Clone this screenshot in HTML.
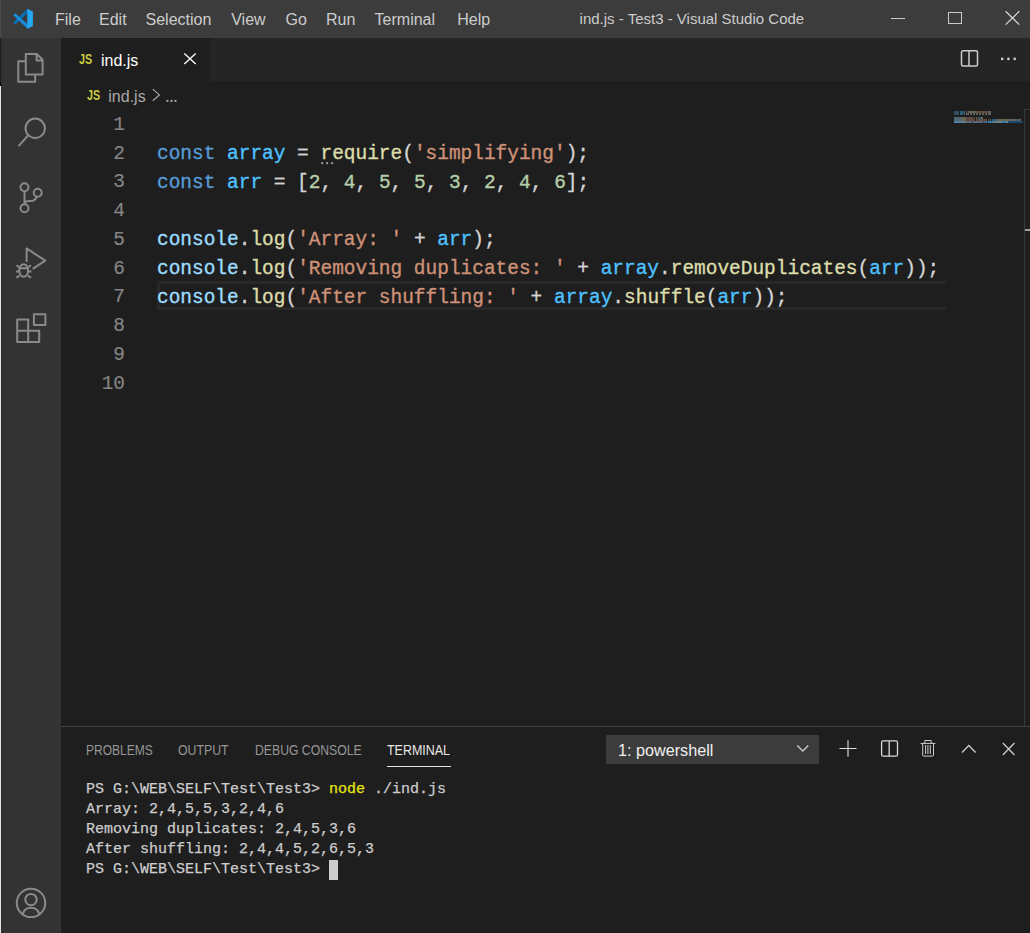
<!DOCTYPE html>
<html><head><meta charset="utf-8">
<style>
*{margin:0;padding:0;box-sizing:border-box}
html,body{width:1030px;height:933px;overflow:hidden;background:#1e1e1e}
body{position:relative;font-family:"Liberation Sans",sans-serif}
.a{position:absolute}
.t{position:absolute;white-space:pre;line-height:1}
#title{left:0;top:0;width:1030px;height:38px;background:#3c3c3c}
#menu span{position:absolute;top:10.4px;font-size:16px;color:#cccccc;white-space:pre;line-height:19px}
#act{left:0;top:38px;width:61px;height:895px;background:#333333}
#tabs{left:61px;top:38px;width:969px;height:43px;background:#252526}
#tab{left:61px;top:38px;width:149px;height:44px;background:#1e1e1e}
.code{position:absolute;left:157px;-webkit-text-stroke:0.35px currentColor;font-family:"Liberation Mono",monospace;font-size:19.47px;line-height:28.75px;white-space:pre;color:#d4d4d4}
.ln{position:absolute;left:90px;-webkit-text-stroke:0.15px currentColor;width:35px;text-align:right;font-family:"Liberation Mono",monospace;font-size:19.47px;line-height:28.75px;color:#858585}
.k{color:#569cd6}.c{color:#4fc1ff}.v{color:#9cdcfe}.f{color:#dcdcaa}.s{color:#ce9178}.n{color:#b5cea8}
.term{position:absolute;left:86px;-webkit-text-stroke:0.25px currentColor;font-family:"Liberation Mono",monospace;font-size:15px;line-height:20px;white-space:pre;color:#cccccc}
.js{font-size:14px;font-weight:bold;color:#cbcb41;line-height:14px;transform:scaleX(0.77);transform-origin:0 0}
.pt{position:absolute;top:741px;font-size:15px;line-height:18px;color:#969696;white-space:pre;transform-origin:0 0}
</style></head><body>
<div id="title" class="a"></div>
<svg class="a" style="left:0;top:0" width="40" height="38">
  <polygon points="13.3,22.4 15.2,24.4 27.6,13 27.6,8.8" fill="#0870b8"/>
  <polygon points="13.3,15.2 15.2,13.2 27.6,24.2 27.6,28.8" fill="#138ee0"/>
  <polygon points="27.3,8.8 32.9,11.6 32.9,26 27.3,28.9" fill="#25a9f2"/>
</svg>
<div id="menu">
<span style="left:55px">File</span>
<span style="left:99px">Edit</span>
<span style="left:145.5px">Selection</span>
<span style="left:231.2px">View</span>
<span style="left:285.6px">Go</span>
<span style="left:326px">Run</span>
<span style="left:374.6px">Terminal</span>
<span style="left:457.2px">Help</span>
</div>
<div class="t" style="left:579.6px;top:9px;font-size:15px;color:#cccccc;line-height:19px">ind.js - Test3 - Visual Studio Code</div>
<svg class="a" style="left:880px;top:0" width="150" height="38" fill="none" stroke="#cccccc" stroke-width="1">
  <line x1="11" y1="18.5" x2="25" y2="18.5"/>
  <rect x="68.5" y="12.5" width="13" height="11"/>
  <path d="M125.6 11.3L139.3 24.6M139.3 11.3L125.6 24.6" stroke-width="1.25" stroke="#d8d8d8"/>
</svg>

<div id="act" class="a"></div>
<div class="a" style="left:0;top:0;width:1px;height:38px;background:#4a4a4a"></div>
<div class="a" style="left:0;top:38px;width:1px;height:895px;background:#e6e6e6"></div>
<div class="a" style="left:0;top:38px;width:1px;height:44px;background:#1b1f26"></div>
<div class="a" style="left:0;top:82px;width:1px;height:4px;background:#080808"></div>
<div class="a" style="left:1px;top:38px;width:1px;height:895px;background:#2c2c2c"></div>
<svg class="a" style="left:0;top:38px" width="61" height="895" fill="none" stroke="#8a8a8a" stroke-width="2" stroke-linejoin="round">
  <g transform="translate(0,-38)">
  <path d="M25.8 54.1H37L42.6 59.7V74.5H25.8Z M36.6 54.1V60.4H42.6 M25.8 61.3H18.3V81.7H35.2V74.5"/>
  <circle cx="35.2" cy="128.3" r="9.7"/><line x1="28.4" y1="135.2" x2="18.5" y2="146.2"/>
  <circle cx="24.5" cy="187.3" r="4"/><circle cx="24.5" cy="208.3" r="4"/><circle cx="37.7" cy="192.8" r="4"/>
  <path d="M24.5 191.3V204.3 M36.8 196.6Q35.5 201 30.5 201H29Q25 201 24.5 204"/>
  <path d="M26.6 262V248.4L45.2 260.7L32.7 268.9"/>
  <ellipse cx="23.7" cy="270.5" rx="4.4" ry="6.3"/>
  <path d="M19.3 268.3H28.1 M16.4 265.2L19.4 267.3 M31 265.2L28 267.3 M16 271.6H19.3 M31.4 271.6H28.1 M16.4 277.8L19.4 275.6 M31 277.8L28 275.6"/>
  <path d="M17.2 319.5H28.2V341.9H17.2Z M17.2 330.8H39.2V341.9H28.2 M33.9 314.2H45.4V325H33.9Z"/>
  <circle cx="31" cy="902.9" r="14.2"/><circle cx="31" cy="899.6" r="5.7"/>
  <path d="M22.9 914A8.4 8.4 0 0 1 39.1 914"/>
  </g>
</svg>

<div id="tabs" class="a"></div>
<div id="tab" class="a"></div>
<div class="t js" style="left:78.8px;top:52px">JS</div>
<div class="t" style="left:101px;top:51px;font-size:16px;color:#ffffff;line-height:19px">ind.js</div>
<svg class="a" style="left:183px;top:52px" width="14" height="14" stroke="#ffffff" stroke-width="1.3"><path d="M1.3 1.5L12.7 12.1M12.7 1.5L1.3 12.1"/></svg>
<svg class="a" style="left:958px;top:48px" width="64" height="22" fill="none" stroke="#cccccc" stroke-width="1.5">
  <rect x="3.5" y="2.8" width="16" height="15.2" rx="1.5"/><line x1="11" y1="2.8" x2="11" y2="18"/>
  <g fill="#cccccc" stroke="none"><circle cx="44.2" cy="10.9" r="1.3"/><circle cx="50.4" cy="10.9" r="1.3"/><circle cx="56.7" cy="10.9" r="1.3"/></g>
</svg>

<div class="t js" style="left:86.6px;top:87.5px">JS</div>
<div class="t" style="left:108.3px;top:86.8px;font-size:16px;color:#a9a9a9;line-height:19px">ind.js</div>
<svg class="a" style="left:148px;top:87px" width="30" height="16" fill="none" stroke="#a9a9a9" stroke-width="1.2"><path d="M4.8 2.1L11.4 7.9L4.8 13.7"/><g fill="#a9a9a9" stroke="none"><rect x="18.4" y="12.9" width="2" height="2"/><rect x="22.5" y="12.9" width="2" height="2"/><rect x="26.5" y="12.9" width="2" height="2"/></g></svg>

<!-- current line -->
<div class="a" style="left:157px;top:281px;width:789px;height:29px;border:3px solid #282828;border-right:0"></div>

<div class="ln" style="top:110.8px">1<br>2<br>3<br>4<br>5<br>6<br>7<br>8<br>9<br>10</div>
<div class="code" style="top:111.2px">
<span class="k">const</span> <span class="c">array</span> = <span class="f">require</span>(<span class="s">'simplifying'</span>);
<span class="k">const</span> <span class="c">arr</span> = [<span class="n">2</span>, <span class="n">4</span>, <span class="n">5</span>, <span class="n">5</span>, <span class="n">3</span>, <span class="n">2</span>, <span class="n">4</span>, <span class="n">6</span>];

<span class="v">console</span>.<span class="f">log</span>(<span class="s">'Array: '</span> + <span class="c">arr</span>);
<span class="v">console</span>.<span class="f">log</span>(<span class="s">'Removing duplicates: '</span> + <span class="c">array</span>.<span class="f">removeDuplicates</span>(<span class="c">arr</span>));
<span class="v">console</span>.<span class="f">log</span>(<span class="s">'After shuffling: '</span> + <span class="c">array</span>.<span class="f">shuffle</span>(<span class="c">arr</span>));
</div>
<svg class="a" style="left:320px;top:161px" width="16" height="4" fill="#9a9a9a"><circle cx="2.2" cy="2.2" r="1.15"/><circle cx="7.1" cy="2.2" r="1.15"/><circle cx="12.1" cy="2.2" r="1.15"/></svg>

<!-- minimap -->
<svg class="a" style="left:954px;top:109px" width="70" height="16"><rect x="0" y="12" width="69" height="2" fill="#1d4a75"/><g opacity="0.38"><rect x="0" y="2" width="5" height="2" fill="#569cd6"/><rect x="6" y="2" width="5" height="2" fill="#4fc1ff"/><rect x="12" y="2" width="1" height="2" fill="#d4d4d4"/><rect x="14" y="2" width="7" height="2" fill="#dcdcaa"/><rect x="21" y="2" width="1" height="2" fill="#d4d4d4"/><rect x="22" y="2" width="13" height="2" fill="#ce9178"/><rect x="35" y="2" width="2" height="2" fill="#d4d4d4"/><rect x="0" y="4" width="5" height="2" fill="#569cd6"/><rect x="6" y="4" width="3" height="2" fill="#4fc1ff"/><rect x="10" y="4" width="1" height="2" fill="#d4d4d4"/><rect x="12" y="4" width="1" height="2" fill="#d4d4d4"/><rect x="13" y="4" width="1" height="2" fill="#b5cea8"/><rect x="14" y="4" width="1" height="2" fill="#d4d4d4"/><rect x="16" y="4" width="1" height="2" fill="#b5cea8"/><rect x="17" y="4" width="1" height="2" fill="#d4d4d4"/><rect x="19" y="4" width="1" height="2" fill="#b5cea8"/><rect x="20" y="4" width="1" height="2" fill="#d4d4d4"/><rect x="22" y="4" width="1" height="2" fill="#b5cea8"/><rect x="23" y="4" width="1" height="2" fill="#d4d4d4"/><rect x="25" y="4" width="1" height="2" fill="#b5cea8"/><rect x="26" y="4" width="1" height="2" fill="#d4d4d4"/><rect x="28" y="4" width="1" height="2" fill="#b5cea8"/><rect x="29" y="4" width="1" height="2" fill="#d4d4d4"/><rect x="31" y="4" width="1" height="2" fill="#b5cea8"/><rect x="32" y="4" width="1" height="2" fill="#d4d4d4"/><rect x="34" y="4" width="1" height="2" fill="#b5cea8"/><rect x="35" y="4" width="2" height="2" fill="#d4d4d4"/><rect x="0" y="8" width="7" height="2" fill="#9cdcfe"/><rect x="7" y="8" width="1" height="2" fill="#d4d4d4"/><rect x="8" y="8" width="3" height="2" fill="#dcdcaa"/><rect x="11" y="8" width="1" height="2" fill="#d4d4d4"/><rect x="12" y="8" width="7" height="2" fill="#ce9178"/><rect x="20" y="8" width="1" height="2" fill="#ce9178"/><rect x="22" y="8" width="1" height="2" fill="#d4d4d4"/><rect x="24" y="8" width="3" height="2" fill="#4fc1ff"/><rect x="27" y="8" width="2" height="2" fill="#d4d4d4"/><rect x="0" y="10" width="7" height="2" fill="#9cdcfe"/><rect x="7" y="10" width="1" height="2" fill="#d4d4d4"/><rect x="8" y="10" width="3" height="2" fill="#dcdcaa"/><rect x="11" y="10" width="1" height="2" fill="#d4d4d4"/><rect x="12" y="10" width="9" height="2" fill="#ce9178"/><rect x="22" y="10" width="11" height="2" fill="#ce9178"/><rect x="34" y="10" width="1" height="2" fill="#ce9178"/><rect x="36" y="10" width="1" height="2" fill="#d4d4d4"/><rect x="38" y="10" width="5" height="2" fill="#4fc1ff"/><rect x="43" y="10" width="1" height="2" fill="#d4d4d4"/><rect x="44" y="10" width="16" height="2" fill="#dcdcaa"/><rect x="60" y="10" width="1" height="2" fill="#d4d4d4"/><rect x="61" y="10" width="3" height="2" fill="#4fc1ff"/><rect x="64" y="10" width="3" height="2" fill="#d4d4d4"/><rect x="0" y="12" width="7" height="2" fill="#9cdcfe"/><rect x="7" y="12" width="1" height="2" fill="#d4d4d4"/><rect x="8" y="12" width="3" height="2" fill="#dcdcaa"/><rect x="11" y="12" width="1" height="2" fill="#d4d4d4"/><rect x="12" y="12" width="6" height="2" fill="#ce9178"/><rect x="19" y="12" width="10" height="2" fill="#ce9178"/><rect x="30" y="12" width="1" height="2" fill="#ce9178"/><rect x="32" y="12" width="1" height="2" fill="#d4d4d4"/><rect x="34" y="12" width="5" height="2" fill="#4fc1ff"/><rect x="39" y="12" width="1" height="2" fill="#d4d4d4"/><rect x="40" y="12" width="7" height="2" fill="#dcdcaa"/><rect x="47" y="12" width="1" height="2" fill="#d4d4d4"/><rect x="48" y="12" width="3" height="2" fill="#4fc1ff"/><rect x="51" y="12" width="3" height="2" fill="#d4d4d4"/></g></svg>
<div class="a" style="left:1024px;top:109px;width:1px;height:617px;background:#3a3a3a"></div>
<div class="a" style="left:1024px;top:109px;width:6px;height:1px;background:#3a3a3a"></div>
<div class="a" style="left:1025px;top:229px;width:5px;height:2px;background:#a0a0a0"></div>

<!-- panel -->
<div class="a" style="left:61px;top:726px;width:969px;height:1px;background:#414141"></div>
<div class="pt" style="left:86px;transform:scaleX(0.80)">PROBLEMS</div>
<div class="pt" style="left:178px;transform:scaleX(0.82)">OUTPUT</div>
<div class="pt" style="left:254.5px;transform:scaleX(0.815)">DEBUG CONSOLE</div>
<div class="pt" style="left:386.5px;transform:scaleX(0.83);color:#e7e7e7">TERMINAL</div>
<div class="a" style="left:386.8px;top:766px;width:64.2px;height:1px;background:#e7e7e7"></div>
<div class="a" style="left:606px;top:735px;width:213px;height:29px;background:#3c3c3c"></div>
<div class="t" style="left:618px;top:741px;font-size:16.2px;color:#f0f0f0;line-height:19px">1: powershell</div>
<svg class="a" style="left:790px;top:730px" width="240" height="40" fill="none" stroke="#cccccc" stroke-width="1.3">
  <path d="M7.3 15.5L12.8 21L18.3 15.5"/>
  <path d="M58 10.2V26.8 M49.5 18.5H66.5" stroke-width="1.1" stroke="#dedede"/>
  <rect x="91.6" y="10.9" width="15.9" height="15.3" rx="1.5" stroke="#dadada"/><line x1="99.2" y1="10.9" x2="99.2" y2="26.2" stroke="#dadada"/>
  <path d="M130.6 13.4H145.4 M134.8 13.4V10.5H141.2V13.4 M132.7 13.4V25.2Q132.7 26.1 133.6 26.1H142.6Q143.5 26.1 143.5 25.2V13.4 M135.6 15V24 M137.9 15V24 M140.3 15V24" stroke-width="1"/>
  <path d="M172 22.5L178.8 15.5L185.6 22.5"/>
  <path d="M212.8 13L224.5 25 M224.5 13L212.8 25"/>
</svg>

<div class="term" style="top:780px"><span>PS G:\WEB\SELF\Test\Test3&gt; </span><span style="color:#e5e510">node</span> ./ind.js
Array: 2,4,5,5,3,2,4,6
Removing duplicates: 2,4,5,3,6
After shuffling: 2,4,4,5,2,6,5,3
PS G:\WEB\SELF\Test\Test3&gt; </div>
<div class="a" style="left:329px;top:860px;width:9px;height:20px;background:#cccccc"></div>
</body></html>
